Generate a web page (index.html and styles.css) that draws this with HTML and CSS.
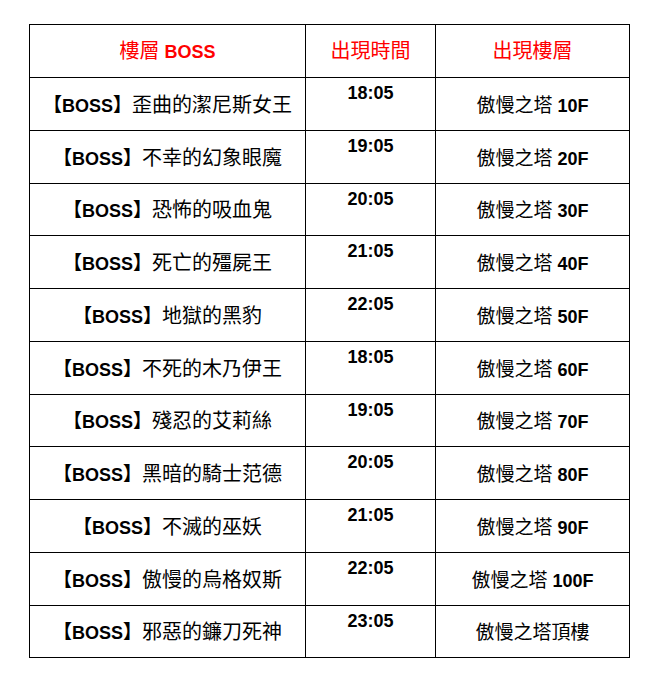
FILE: index.html
```html
<!DOCTYPE html>
<html lang="zh-Hant">
<head>
<meta charset="utf-8">
<title>BOSS 出現時間</title>
<link rel="stylesheet" href="styles.css">
</head>
<body>
<table class="boss-table">
  <colgroup>
    <col class="c-name">
    <col class="c-time">
    <col class="c-floor">
  </colgroup>
  <thead>
    <tr class="head-row">
      <th><span class="zh">樓層</span> BOSS</th>
      <th><span class="zh">出現時間</span></th>
      <th><span class="zh">出現樓層</span></th>
    </tr>
  </thead>
  <tbody>
    <tr><td class="name"><span class="br">【</span>BOSS<span class="br">】</span><span class="zh">歪曲的潔尼斯女王</span></td><td class="time">18:05</td><td class="floor"><span class="zh">傲慢之塔</span> 10F</td></tr>
    <tr><td class="name"><span class="br">【</span>BOSS<span class="br">】</span><span class="zh">不幸的幻象眼魔</span></td><td class="time">19:05</td><td class="floor"><span class="zh">傲慢之塔</span> 20F</td></tr>
    <tr><td class="name"><span class="br">【</span>BOSS<span class="br">】</span><span class="zh">恐怖的吸血鬼</span></td><td class="time">20:05</td><td class="floor"><span class="zh">傲慢之塔</span> 30F</td></tr>
    <tr><td class="name"><span class="br">【</span>BOSS<span class="br">】</span><span class="zh">死亡的殭屍王</span></td><td class="time">21:05</td><td class="floor"><span class="zh">傲慢之塔</span> 40F</td></tr>
    <tr><td class="name"><span class="br">【</span>BOSS<span class="br">】</span><span class="zh">地獄的黑豹</span></td><td class="time">22:05</td><td class="floor"><span class="zh">傲慢之塔</span> 50F</td></tr>
    <tr><td class="name"><span class="br">【</span>BOSS<span class="br">】</span><span class="zh">不死的木乃伊王</span></td><td class="time">18:05</td><td class="floor"><span class="zh">傲慢之塔</span> 60F</td></tr>
    <tr><td class="name"><span class="br">【</span>BOSS<span class="br">】</span><span class="zh">殘忍的艾莉絲</span></td><td class="time">19:05</td><td class="floor"><span class="zh">傲慢之塔</span> 70F</td></tr>
    <tr><td class="name"><span class="br">【</span>BOSS<span class="br">】</span><span class="zh">黑暗的騎士范德</span></td><td class="time">20:05</td><td class="floor"><span class="zh">傲慢之塔</span> 80F</td></tr>
    <tr><td class="name"><span class="br">【</span>BOSS<span class="br">】</span><span class="zh">不滅的巫妖</span></td><td class="time">21:05</td><td class="floor"><span class="zh">傲慢之塔</span> 90F</td></tr>
    <tr><td class="name"><span class="br">【</span>BOSS<span class="br">】</span><span class="zh">傲慢的烏格奴斯</span></td><td class="time">22:05</td><td class="floor"><span class="zh">傲慢之塔</span> 100F</td></tr>
    <tr><td class="name"><span class="br">【</span>BOSS<span class="br">】</span><span class="zh">邪惡的鐮刀死神</span></td><td class="time">23:05</td><td class="floor"><span class="zh">傲慢之塔頂樓</span></td></tr>
  </tbody>
</table>
</body>
</html>
```

FILE: styles.css
```css
html, body {
  margin: 0;
  padding: 0;
  background: #ffffff;
}

body {
  padding: 24px 0 0 29px;
  font-family: "Liberation Sans", Arial, "Noto Sans CJK TC", sans-serif;
  color: #000;
}

.boss-table {
  border-collapse: collapse;
  table-layout: fixed;
  width: 600px;
  border: 1px solid #000;
}

.c-name { width: 276px; }
.c-time { width: 130px; }
.c-floor { width: 194px; }

.boss-table th,
.boss-table td {
  border: 1px solid #000;
  padding: 0;
  text-align: center;
  font-size: 18px;
  font-weight: 700;
  white-space: nowrap;
  line-height: 20px;
}

.head-row {
  height: 53px;
}

.boss-table th {
  color: #ff0000;
  vertical-align: middle;
}

.boss-table tbody tr {
  height: 52.75px;
}

.boss-table td {
  vertical-align: middle;
}

.boss-table td.time {
  vertical-align: top;
  padding-top: 5px;
}

.boss-table td.name,
.boss-table td.floor {
  padding-top: 2px;
}

.zh {
  font-family: "Noto Sans CJK TC", "Noto Sans CJK SC", sans-serif;
  font-weight: 400;
  font-size: 20px;
}

.floor .zh {
  font-size: 19px;
}

.br {
  font-family: "Noto Sans CJK TC", sans-serif;
  font-weight: 700;
  font-size: 19px;
}
```
